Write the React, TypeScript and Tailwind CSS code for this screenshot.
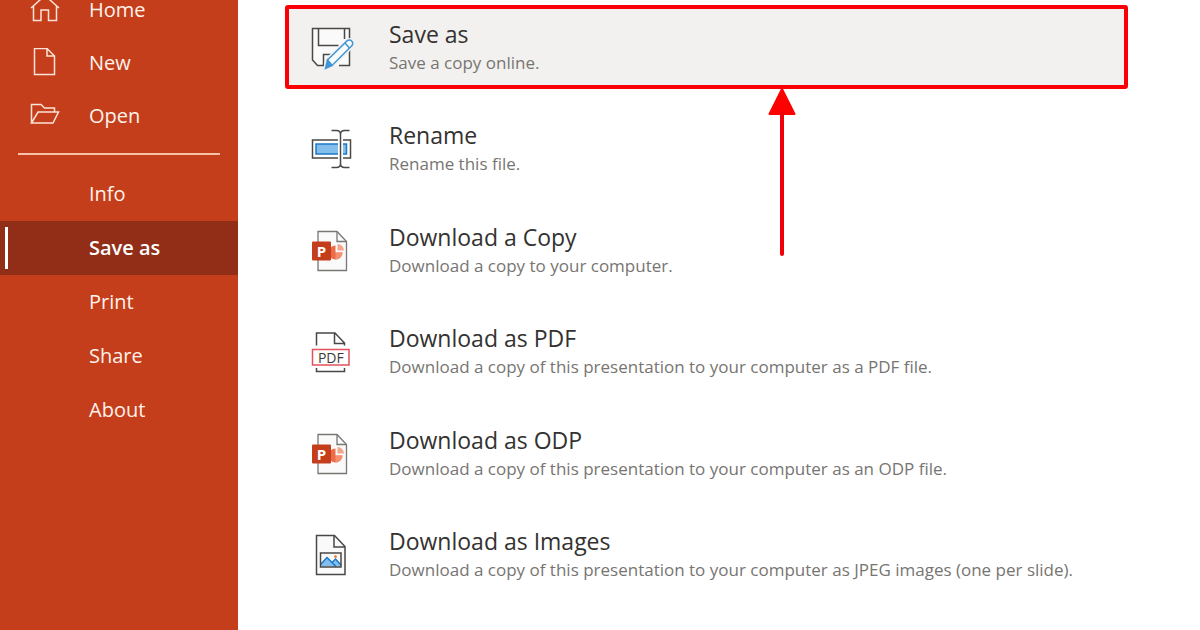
import React, { useState } from 'react';
import clsx from 'clsx';

const HomeIcon = () => (
  <svg width="30" height="30" viewBox="0 0 30 30" fill="none" stroke="#fbe3d6" strokeWidth="1.5" aria-hidden="true">
    <path d="M1 13L15 0.500l14 12.500M3.500 11v14.500h7.500V15h7.500v10.500H26.500V11" />
  </svg>
);

const NewIcon = () => (
  <svg width="30" height="30" viewBox="0 0 30 30" fill="none" stroke="#fbe3d6" strokeWidth="1.5" aria-hidden="true">
    <path d="M4.500 0.500h12.500l7.500 7.500v18.500H4.500zM17 0.500v7.500H24.500" />
  </svg>
);

const OpenIcon = () => (
  <svg width="30" height="30" viewBox="0 0 30 30" fill="none" stroke="#fbe3d6" strokeWidth="1.5" aria-hidden="true">
    <path d="M1.500 22V3.500h9.500l3.500 3.500h10V11M1.500 22L8 11h20.500L23 22z" />
  </svg>
);

const SaveAsIcon = () => (
  <svg width="44" height="44" viewBox="0 0 44 44" fill="none" strokeWidth="1.5" aria-hidden="true">
    <path d="M2.500 2.500h37V39.500H8.500L2.500 34z" fill="#fafafa" />
    <path d="M39.500 14V2.500h-37V34l5 5.500H14M39.500 24v15.500H29" stroke="#4a4846" />
    <path d="M8.500 2.500v17H28.500M34.500 13V2.500M13.500 39.500V28.500h10" stroke="#4a4846" />
    <path d="M17 34L37.500 14.500c3.500-1.500 7 2 5 5L22.500 40 15.500 42.500z" fill="#fff" stroke="#f3f1ef" strokeWidth="4" />
    <path d="M17.500 34L37.500 14.500c3.500-1.500 6.500 2 4.500 5L22 39.500z" fill="#fafafa" stroke="#3e96d6" />
    <path d="M17.500 34l4.500 5.500-6.500 3z" fill="#3e96d6" stroke="#3e96d6" />
    <path d="M35 17l4.500 5" stroke="#3e96d6" />
  </svg>
);

const RenameIcon = () => (
  <svg width="44" height="44" viewBox="0 0 44 44" fill="none" strokeWidth="1.5" aria-hidden="true">
    <rect x="2.500" y="13" width="38" height="18" fill="#fff" stroke="#4a4846" />
    <rect x="6" y="17" width="30.500" height="10" fill="#83beec" stroke="#1e78c8" />
    <path d="M30.500 6v32" stroke="#fff" strokeWidth="5" />
    <path d="M21.500 3.500h5q4 0 4 4v29q0 4-4 4h-5M39.500 3.500h-5q-4 0-4 4v29q0 4 4 4h5" stroke="#4a4846" />
  </svg>
);

const PowerPointIcon = () => (
  <svg width="44" height="44" viewBox="0 0 44 44" fill="none" aria-hidden="true">
    <path d="M8 2.500h19l9.500 10V41.500H8z" fill="#fafafa" stroke="#797774" strokeWidth="1.300" />
    <path d="M27 2.500v10h9.500" stroke="#797774" strokeWidth="1.300" />
    <path d="M25.500 16.500a7 7 0 1 0 7 7h-7z" fill="#ed6c47" />
    <path d="M25.500 23.500h7a7 7 0 0 1-7 7z" fill="#f5906f" />
    <path d="M27.500 15v6.500H34a6.500 6.500 0 0 0-6.500-6.500z" fill="#f4a58c" />
    <rect x="2" y="12.500" width="19" height="19" rx="1" fill="#c43e1c" />
    <text x="11.500" y="27.500" textAnchor="middle" fontFamily="Open Sans, sans-serif" fontSize="15" fontWeight="700" fill="#fff">P</text>
  </svg>
);

const PdfIcon = () => (
  <svg width="44" height="44" viewBox="0 0 44 44" fill="none" strokeWidth="1.500" aria-hidden="true">
    <path d="M6.500 15.500V3h18.500l9.500 10v2.500M24.500 3v10.500H34.500M6.500 38v3.500h28V38" stroke="#4a4846" />
    <rect x="2.500" y="19.500" width="36.500" height="15.500" fill="#fff" stroke="#e2525c" />
    <text x="20.800" y="32.500" textAnchor="middle" fontFamily="Open Sans, sans-serif" fontSize="14" fill="#3b3a38">PDF</text>
  </svg>
);

const ImagesIcon = () => (
  <svg width="44" height="44" viewBox="0 0 44 44" fill="none" strokeWidth="1.500" aria-hidden="true">
    <path d="M6.500 2.500h18l10.500 11v28H6.500z" fill="#fafafa" stroke="#4a4846" />
    <path d="M24 2.500v11.500h11" stroke="#4a4846" />
    <path d="M11 33.500v-3l6.500-6.500 5 5 3.500-3 5 5v2.500z" fill="#83beec" />
    <path d="M11 31l6-6.500 9 9M22 29.500l3.500-3.500 5.500 6" stroke="#1e78c8" />
    <circle cx="25.500" cy="23.500" r="1.500" fill="#e8843c" />
    <rect x="10.500" y="20" width="20.500" height="14" stroke="#4a4846" />
  </svg>
);

const fileItems = [
  { label: 'Home', icon: <HomeIcon /> },
  { label: 'New', icon: <NewIcon /> },
  { label: 'Open', icon: <OpenIcon /> },
];

const menuItems = ['Info', 'Save as', 'Print', 'Share', 'About'];

const saveOptions = [
  { title: 'Save as', text: 'Save a copy online.', icon: <SaveAsIcon /> },
  { title: 'Rename', text: 'Rename this file.', icon: <RenameIcon /> },
  { title: 'Download a Copy', text: 'Download a copy to your computer.', icon: <PowerPointIcon /> },
  { title: 'Download as PDF', text: 'Download a copy of this presentation to your computer as a PDF file.', icon: <PdfIcon /> },
  { title: 'Download as ODP', text: 'Download a copy of this presentation to your computer as an ODP file.', icon: <PowerPointIcon /> },
  { title: 'Download as Images', text: 'Download a copy of this presentation to your computer as JPEG images (one per slide).', icon: <ImagesIcon /> },
];

const Arrow = () => (
  <svg className="absolute left-[59%] top-full -translate-x-1/2" width="28" height="168" viewBox="0 0 28 168" aria-hidden="true">
    <path d="M14 0L26.500 25H1.500z" fill="#fe0000" stroke="#fe0000" strokeWidth="2" strokeLinejoin="round" />
    <path d="M14 24v141" stroke="#ee0008" strokeWidth="4" strokeLinecap="round" />
  </svg>
);

const App = () => {
  const [active, setActive] = useState('Save as');

  return (
    <div className="flex min-h-screen overflow-hidden bg-white font-['Open_Sans','Noto_Sans',sans-serif]">
      <nav className="w-[238px] shrink-0 overflow-hidden bg-[#c43e1c] text-xl font-medium text-[#fff3ea]">
        <div className="-mt-[17px]">
          {fileItems.map((item) => (
            <button key={item.label} type="button" className="flex h-[53px] w-full items-center gap-[29px] pl-[30px] text-left">
              {item.icon}
              <span>{item.label}</span>
            </button>
          ))}
        </div>
        <hr className="mx-[18px] mt-[11px] mb-3 border-t-2 border-[#f6c3a8]" />
        {menuItems.map((label) => (
          <button
            key={label}
            type="button"
            onClick={() => setActive(label)}
            className={clsx(
              'flex h-[54px] w-full items-center pl-[5px] text-left',
              active === label && 'bg-[#922e17] font-semibold text-white'
            )}
          >
            <span className={clsx('mr-[81px] h-[42px] w-[3px]', active === label && 'bg-white')} />
            {label}
          </button>
        ))}
      </nav>

      <main className="flex grow flex-col justify-between pt-[5px] pr-[72px] pb-[34px] pl-[47px]">
        {saveOptions.map((option, index) => (
          <div key={option.title} className="relative">
            <button
              type="button"
              className={clsx(
                'flex h-[84px] w-full items-center gap-[35px] rounded-[3px] border-4 pt-[2px] pl-[21px] text-left',
                index === 0 ? 'border-[#fa0006] bg-[#f3f1ef]' : 'border-transparent'
              )}
            >
              {option.icon}
              <span className="flex flex-col">
                <span className="text-[23px] leading-[30px] text-[#333230]">{option.title}</span>
                <span className="text-[17px] leading-[28px] text-[#777572]">{option.text}</span>
              </span>
            </button>
            {index === 0 && <Arrow />}
          </div>
        ))}
      </main>
    </div>
  );
};

export default App;
